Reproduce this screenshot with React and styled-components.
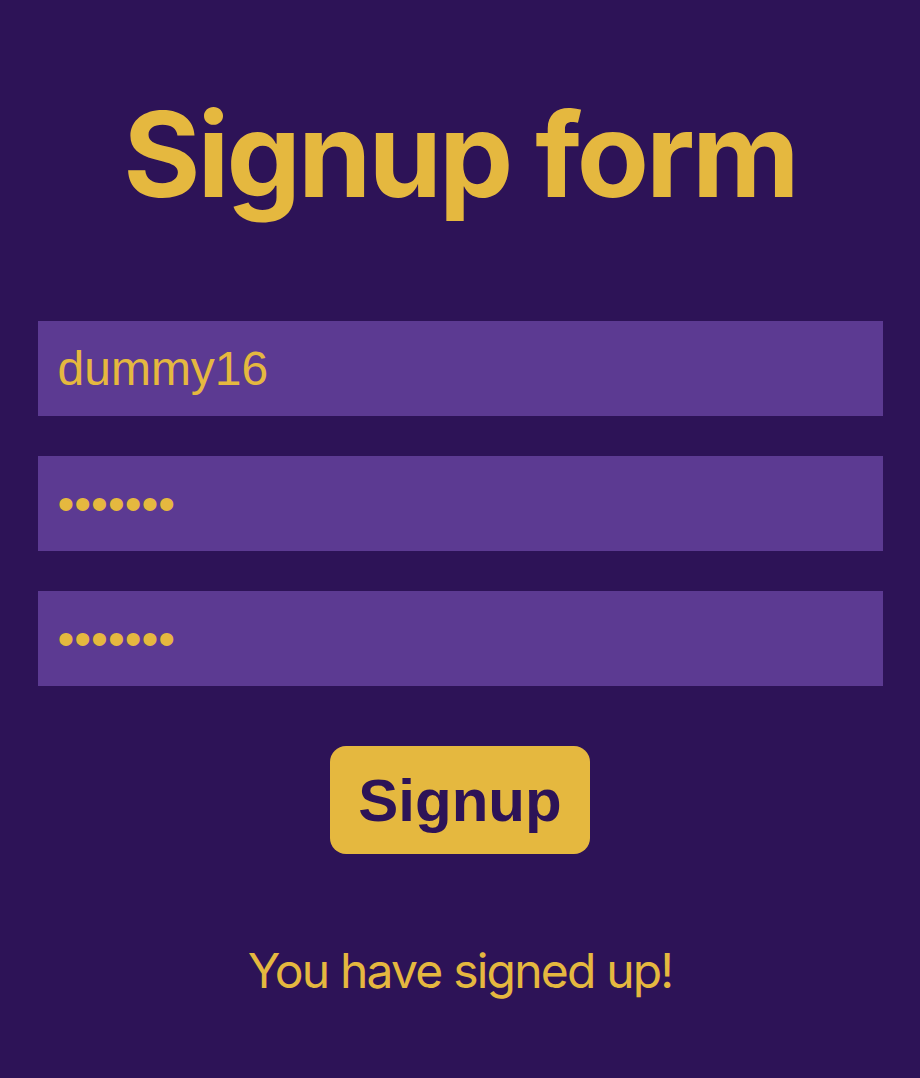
import styled, { createGlobalStyle } from 'styled-components';
import { useState } from 'react';

const GlobalStyle = createGlobalStyle`
	body {
		margin: 0;
		background-color: #2d1357;
	}
`;

const Page = styled.div`
	display: flex;
	flex-direction: column;
	align-items: center;
	min-height: 1078px;
	padding-top: 83px;
	box-sizing: border-box;
	background-color: #2d1357;
`;

const Title = styled.h1`
	margin: 0 0 96px;
	font-family: Inter, 'Liberation Sans', sans-serif;
	font-weight: 700;
	font-size: 118px;
	line-height: 142px;
	letter-spacing: -3px;
	color: #e5b83f;
`;

const Form = styled.form`
	display: flex;
	flex-direction: column;
	align-items: center;
	width: 845px;
`;

const Fields = styled.div`
	display: flex;
	flex-direction: column;
	gap: 40px;
	width: 100%;
`;

const Field = styled.input`
	display: block;
	width: 100%;
	box-sizing: border-box;
	height: 95px;
	padding: 0 20px;
	border: none;
	outline: none;
	background-color: #5c3a92;
	color: #e5b83f;
	font-family: 'Liberation Sans', Arial, sans-serif;
	font-size: 48px;
`;

const SubmitButton = styled.button`
	margin-top: 60px;
	width: 260px;
	height: 108px;
	border: none;
	border-radius: 16px;
	background-color: #e5b83f;
	color: #2d1357;
	font-family: 'Liberation Sans', Arial, sans-serif;
	font-weight: 700;
	font-size: 60px;
	cursor: pointer;
`;

const Message = styled.p`
	margin: 88px 0 0;
	font-family: Inter, 'Liberation Sans', sans-serif;
	font-size: 48px;
	line-height: 58px;
	letter-spacing: -1.8px;
	color: #e5b83f;
`;

export default function App() {
	const [username, setUsername] = useState('dummy16');
	const [password, setPassword] = useState('1234567');
	const [confirm, setConfirm] = useState('1234567');

	const handleSubmit = (e) => {
		e.preventDefault();
	};

	return (
		<Page>
			<GlobalStyle />
			<Title>Signup form</Title>
			<Form onSubmit={handleSubmit}>
				<Fields>
					<Field type='text' value={username} onChange={(e) => setUsername(e.target.value)} />
					<Field type='password' value={password} onChange={(e) => setPassword(e.target.value)} />
					<Field type='password' value={confirm} onChange={(e) => setConfirm(e.target.value)} />
				</Fields>
				<SubmitButton type='submit'>Signup</SubmitButton>
			</Form>
			<Message>You have signed up!</Message>
		</Page>
	);
}
